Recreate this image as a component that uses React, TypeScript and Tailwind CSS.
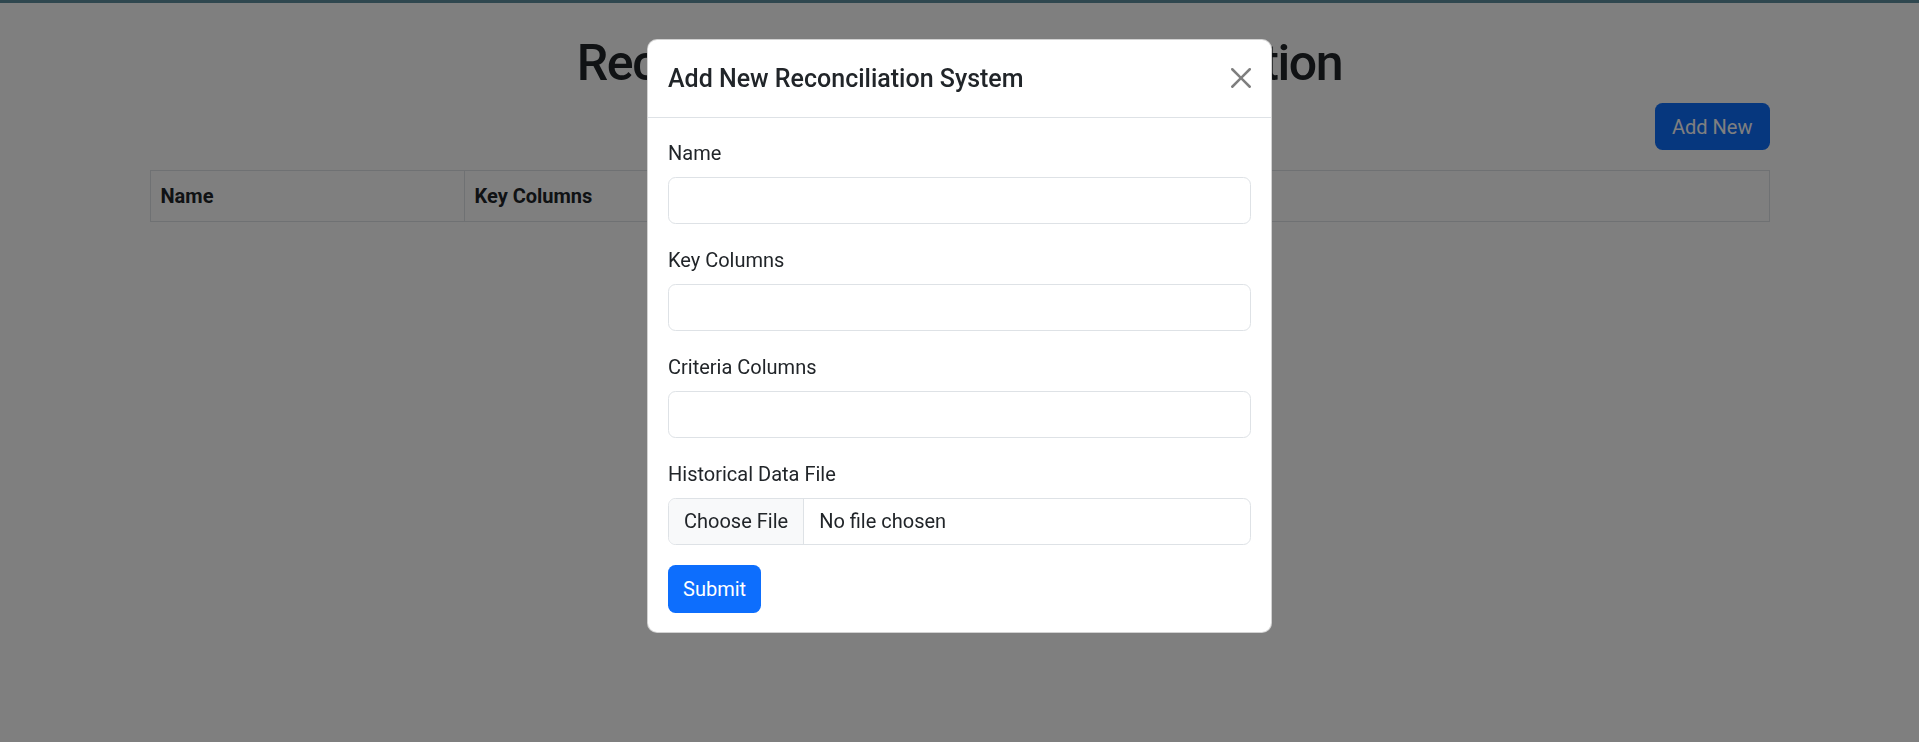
import React from 'react';

const fields = ['Name', 'Key Columns', 'Criteria Columns'];

export default function App() {
  return (
    <div className="relative min-h-screen w-full bg-white font-['Roboto','Liberation_Sans',sans-serif] text-[#212529]">
      {/* top strip */}
      <div className="h-[3px] bg-[#5f8e9e]" />

      {/* page */}
      <div className="mx-auto w-[1650px] px-[15px] pt-[30px]">
        <h1 className="mb-[10px] text-center text-[50px] font-medium leading-[60px] tracking-[-1.4px]">
          Reconciliation System Configuration
        </h1>
        <div className="mb-[20px] flex justify-end">
          <button className="h-[47px] rounded-[7.5px] bg-[#0d6efd] px-[17px] text-[20px] leading-[30px] text-white">
            Add New
          </button>
        </div>
        <table className="w-full border-collapse border border-[#dee2e6] text-left text-[20px] leading-[30px]">
          <thead>
            <tr>
              <th className="w-[314px] border border-[#dee2e6] px-[10px] py-[10px] font-bold">Name</th>
              <th className="w-[430px] border border-[#dee2e6] px-[10px] py-[10px] font-bold">Key Columns</th>
              <th className="w-[370px] border border-[#dee2e6] px-[10px] py-[10px] font-bold">Criteria Columns</th>
              <th className="border border-[#dee2e6] px-[10px] py-[10px] font-bold"></th>
            </tr>
          </thead>
        </table>
      </div>

      {/* backdrop */}
      <div className="fixed inset-0 bg-black/50" />

      {/* modal */}
      <div className="fixed inset-0 flex justify-center pt-[39px]">
        <div className="h-fit w-[625px] rounded-[10px] border border-black/[.175] bg-white">
          <div className="flex items-center justify-between border-b border-[#dee2e6] px-[20px] py-[19.5px]">
            <h5 className="text-[25px] font-medium leading-[37.5px]">Add New Reconciliation System</h5>
            <button className="opacity-50">
              <svg viewBox="0 0 16 16" className="h-[20px] w-[20px]" fill="#000">
                <path d="M.293.293a1 1 0 0 1 1.414 0L8 6.586 14.293.293a1 1 0 1 1 1.414 1.414L9.414 8l6.293 6.293a1 1 0 0 1-1.414 1.414L8 9.414l-6.293 6.293a1 1 0 0 1-1.414-1.414L6.586 8 .293 1.707a1 1 0 0 1 0-1.414z" />
              </svg>
            </button>
          </div>
          <div className="p-[20px] pb-[19px] text-[20px] leading-[30px]">
            {fields.map((f) => (
              <div key={f} className="mb-[20.5px]">
                <label className="mb-[9px] block">{f}</label>
                <input className="block h-[47.5px] w-full rounded-[7.5px] border border-[#dee2e6] px-[15px] outline-none" />
              </div>
            ))}
            <div className="mb-[20px]">
              <label className="mb-[9px] block">Historical Data File</label>
              <div className="flex h-[47.5px] w-full items-center overflow-hidden rounded-[7.5px] border border-[#dee2e6]">
                <span className="flex h-full items-center border-r border-[#dee2e6] bg-[#f8f9fa] px-[15px]">Choose File</span>
                <span className="ml-[15px]">No file chosen</span>
              </div>
            </div>
            <button className="h-[47.5px] rounded-[7.5px] bg-[#0d6efd] px-[15px] text-white">Submit</button>
          </div>
        </div>
      </div>
    </div>
  );
}
